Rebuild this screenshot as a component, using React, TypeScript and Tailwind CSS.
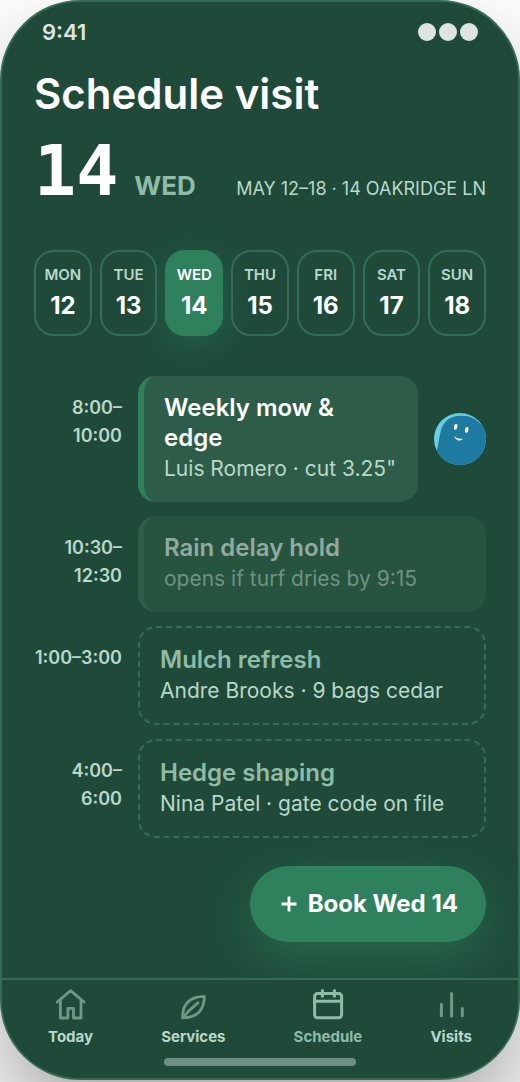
import React from 'react'

const days = [
  { name: 'MON', date: 12 },
  { name: 'TUE', date: 13 },
  { name: 'WED', date: 14 },
  { name: 'THU', date: 15 },
  { name: 'FRI', date: 16 },
  { name: 'SAT', date: 17 },
  { name: 'SUN', date: 18 },
]

const tabs = [
  { label: 'Today', icon: <HomeIcon /> },
  { label: 'Services', icon: <LeafIcon /> },
  { label: 'Schedule', icon: <CalendarIcon />, active: true },
  { label: 'Visits', icon: <BarsIcon /> },
]

function HomeIcon() {
  return (
    <svg width="32" height="32" viewBox="0 0 32 32" fill="none" stroke="currentColor" strokeWidth="2.8" strokeLinecap="round" strokeLinejoin="round">
      <path d="M2.2 14 15.600 2.600 29 14" />
      <path d="M5.400 12v18h7.500v-9.700h5.600V30h7.500V12" />
    </svg>
  )
}

function LeafIcon() {
  return (
    <svg width="32" height="32" viewBox="0 0 32 32" fill="none" stroke="currentColor" strokeWidth="2.8" strokeLinecap="round" strokeLinejoin="round">
      <path d="M5.800 29.700C5 17 12.500 8.300 27.200 8.300 27.600 22 20 30 5.800 29.700Z" />
      <path d="M5.800 29.700 10 25C13 21.500 17 18 21 14.800" />
    </svg>
  )
}

function CalendarIcon() {
  return (
    <svg width="32" height="32" viewBox="0 0 32 32" fill="none" stroke="currentColor" strokeWidth="3" strokeLinecap="round" strokeLinejoin="round">
      <rect x="2.600" y="5.400" width="27" height="24.400" rx="3" />
      <path d="M3 13.200h26.500M10.400 2.600v5.600M22.400 2.600v5.600" />
    </svg>
  )
}

function BarsIcon() {
  return (
    <svg width="32" height="32" viewBox="0 0 32 32" fill="none" stroke="currentColor" strokeWidth="3" strokeLinecap="round">
      <path d="M6.400 16.200v11.600M16.600 5.600v22.400M27.300 20.600v7.200" />
    </svg>
  )
}

function Avatar() {
  return (
    <svg className="shrink-0" width="52" height="52" viewBox="0 0 52 52" role="img" aria-label="Luis Romero">
      <clipPath id="face">
        <circle cx="26" cy="26" r="26" />
      </clipPath>
      <g clipPath="url(#face)">
        <rect width="52" height="52" fill="#67d0e4" />
        <path d="M2 40C4.500 33 5 24 7 17 10 7 18 2.800 27 2.800 37 2.800 43 5.500 52 17V52H2Z" fill="#1f7aa2" />
        <ellipse cx="21.700" cy="13.800" rx="1.700" ry="3" fill="#fff" transform="rotate(15 21.700 13.800)" />
        <ellipse cx="32.700" cy="16.800" rx="1.700" ry="3" fill="#fff" transform="rotate(15 32.700 16.800)" />
        <path d="M20 23C21.500 27.800 26.500 29 28.800 25.400 25.500 26.400 22.500 25.500 20 23Z" fill="#fff" />
      </g>
    </svg>
  )
}

type SlotProps = {
  time: string
  title: string
  note: string
  kind: 'booked' | 'hold' | 'open'
  children?: React.ReactNode
}

const cardStyles = {
  booked: 'border-l-6 border-[#2f815d] bg-[#2d5d49] py-[17px] px-5 text-white',
  hold: 'border-l-6 border-[#2d5d49] bg-[#26543f] py-[17px] px-5 text-[#93aa9f]',
  open: 'border-2 border-dashed border-[#366b56] px-5 pt-[17px] pb-4 text-[#8fbca7]',
}

function Slot({ time, title, note, kind, children }: SlotProps) {
  return (
    <li className="flex gap-4">
      <time className="w-[88px] shrink-0 pt-[18px] text-right text-lg leading-7 font-semibold text-[#b9d8c9]">{time}</time>
      <div className="flex min-w-0 flex-1 items-center gap-4">
        <div className={`min-w-0 flex-1 rounded-[18px] ${cardStyles[kind]}`}>
          <h2 className="text-2xl leading-[30px] font-semibold">{title}</h2>
          <p className={`text-[21px] leading-8 whitespace-nowrap ${kind === 'hold' ? 'text-[#70927f]' : 'text-[#b9d8c9]'}`}>{note}</p>
        </div>
        {children}
      </div>
    </li>
  )
}

export default function App() {
  return (
    <div className="flex min-h-screen flex-col overflow-hidden bg-white pb-0.5 font-['Inter',sans-serif]">
      <div className="flex flex-1 flex-col overflow-hidden rounded-[80px] border-2 border-[#366b56] bg-[#1f4a3a] shadow-[0_48px_96px_rgba(0,0,0,0.35)]">
        <div className="flex items-center justify-between px-10 pt-4 text-[#dde4e1]">
          <span className="text-[22px] leading-7 font-semibold">9:41</span>
          <div className="flex gap-[3px]">
            <span className="size-[18px] rounded-full bg-current" />
            <span className="size-[18px] rounded-full bg-current" />
            <span className="size-[18px] rounded-full bg-current" />
          </div>
        </div>

        <header className="px-8 pt-6">
          <h1 className="text-[42px] leading-12 font-semibold text-white">Schedule visit</h1>
          <div className="flex items-baseline pt-[18px]">
            <span className="font-['DejaVu_Sans_Mono',monospace] text-[70px] leading-[70px] font-bold text-white">14</span>
            <span className="ml-4 text-[26px] font-bold text-[#8fbca7]">WED</span>
            <span className="ml-auto text-lg whitespace-nowrap text-[#b9d8c9]">MAY 12–18 · 14 OAKRIDGE LN</span>
          </div>
        </header>

        <div className="flex gap-2 px-8 pt-11">
          {days.map((day) => {
            const selected = day.date === 14
            return (
              <button
                key={day.date}
                type="button"
                aria-pressed={selected}
                className={`flex min-w-0 flex-1 flex-col items-center rounded-[20px] border-2 pt-[13px] pb-[11px] ${
                  selected
                    ? 'border-[#2f815d] bg-[#2f815d] text-white shadow-[0_8px_32px_rgba(47,129,93,0.4)]'
                    : 'border-[#366b56] text-[#b9d8c9]'
                }`}
              >
                <span className="text-[15px] leading-5 font-semibold">{day.name}</span>
                <span className="mt-1 text-2xl leading-[34px] font-bold text-white">{day.date}</span>
              </button>
            )
          })}
        </div>

        <ul className="flex flex-col gap-[14px] px-8 pt-10">
          <Slot time="8:00–10:00" title="Weekly mow & edge" note={'Luis Romero · cut 3.25"'} kind="booked">
            <Avatar />
          </Slot>
          <Slot time="10:30–12:30" title="Rain delay hold" note="opens if turf dries by 9:15" kind="hold" />
          <Slot time="1:00–3:00" title="Mulch refresh" note="Andre Brooks · 9 bags cedar" kind="open" />
          <Slot time="4:00–6:00" title="Hedge shaping" note="Nina Patel · gate code on file" kind="open" />
        </ul>

        <div className="flex justify-end px-8 pt-7 pb-9">
          <button
            type="button"
            className="flex h-[76px] items-center gap-2 rounded-full bg-[#2f815d] px-7 text-2xl font-bold text-white shadow-[0_16px_48px_rgba(47,129,93,0.55)]"
          >
            <svg width="22" height="22" viewBox="0 0 22 22" stroke="currentColor" strokeWidth="2.8" aria-hidden="true">
              <path d="M3.500 11h15M11 3.500v15" />
            </svg>
            Book Wed 14
          </button>
        </div>

        <nav className="relative mt-auto border-t-2 border-[#366b56] bg-[#1f4a3a] px-3 pt-2 pb-3">
          <div className="flex justify-around">
            {tabs.map((tab) => (
              <a
                key={tab.label}
                href="#"
                aria-current={tab.active ? 'page' : undefined}
                className={`flex flex-col items-center ${tab.active ? 'text-[#8fbca7]' : 'text-[#b9d8c9]'}`}
              >
                <span className={tab.active ? '' : 'text-[#6f9885]'}>{tab.icon}</span>
                <span className="mt-1 text-[15px] leading-[26px] font-bold">{tab.label}</span>
              </a>
            ))}
          </div>
          <div className="mx-auto mt-2 h-2 w-48 rounded-full bg-[#6f8f80]" />
        </nav>
      </div>
    </div>
  )
}
